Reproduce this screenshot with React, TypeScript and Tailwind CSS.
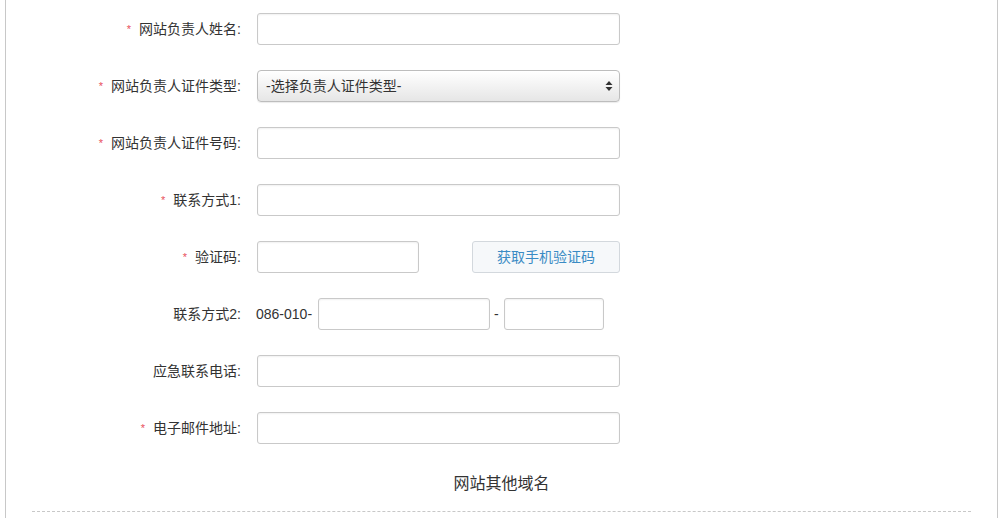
import type { JSX, ReactNode } from "react";

const font = `font-["Liberation_Sans","Noto_Sans_CJK_SC",sans-serif]`;

function Row({ label, required, children }: { label: string; required?: boolean; children: ReactNode }) {
  return (
    <div className="flex items-center h-[32px]">
      <div className="w-[235px] flex justify-end items-center text-[14px] text-[#333]">
        {required && <span className="text-[#e8505b] text-[11px] mr-[8px] leading-none">*</span>}
        <span>{label}:</span>
      </div>
      <div className="ml-[16px] flex items-center">{children}</div>
    </div>
  );
}

function Input({ w = "w-[363px]" }: { w?: string }) {
  return (
    <input
      type="text"
      className={`${w} h-[32px] border border-[#c9c9c9] rounded-[3px] bg-white shadow-[inset_0_1px_2px_rgba(0,0,0,0.06)] outline-none px-2 text-[14px]`}
    />
  );
}

export default function App(): JSX.Element {
  return (
    <div className={`w-[1003px] h-[518px] bg-white overflow-hidden ${font}`}>
      <div className="mx-[5px] h-full border-x border-[#c8c8c8] pt-[13px]">
        <div className="flex flex-col gap-[25px]">
          <Row label="网站负责人姓名" required>
            <Input />
          </Row>
          <Row label="网站负责人证件类型" required>
            <div className="w-[363px] h-[32px] border border-[#bdbdbd] rounded-[4px] bg-gradient-to-b from-white to-[#e6e6e6] shadow-[inset_0_1px_0_#fff,0_1px_1px_rgba(0,0,0,0.08)] flex items-center justify-between pl-[8px] pr-[6px] text-[14px] text-[#333]">
              <span>-选择负责人证件类型-</span>
              <svg width="8" height="12" viewBox="0 0 8 12">
                <path d="M4 1 L7.5 5 H0.5 Z" fill="#333" />
                <path d="M4 11 L7.5 7 H0.5 Z" fill="#333" />
              </svg>
            </div>
          </Row>
          <Row label="网站负责人证件号码" required>
            <Input />
          </Row>
          <Row label="联系方式1" required>
            <Input />
          </Row>
          <Row label="验证码" required>
            <Input w="w-[162px]" />
            <button className="ml-[53px] w-[148px] h-[32px] border border-[#d3d8dd] rounded-[3px] bg-[#f6f8fa] text-[#3a8bc4] text-[14px]">
              获取手机验证码
            </button>
          </Row>
          <Row label="联系方式2">
            <span className="text-[14px] text-[#333] ml-[-1px] mr-[6px]">086-010-</span>
            <Input w="w-[172px]" />
            <span className="text-[14px] text-[#333] ml-[4px] mr-[5px]">-</span>
            <Input w="w-[100px]" />
          </Row>
          <Row label="应急联系电话">
            <Input />
          </Row>
          <Row label="电子邮件地址" required>
            <Input />
          </Row>
        </div>
        <div className="mt-[28px] text-center text-[16px] text-[#333] leading-[24px]">网站其他域名</div>
        <div className="mx-[26px] mt-[15px] border-t border-dashed border-[#c8c8c8]" />
      </div>
    </div>
  );
}
